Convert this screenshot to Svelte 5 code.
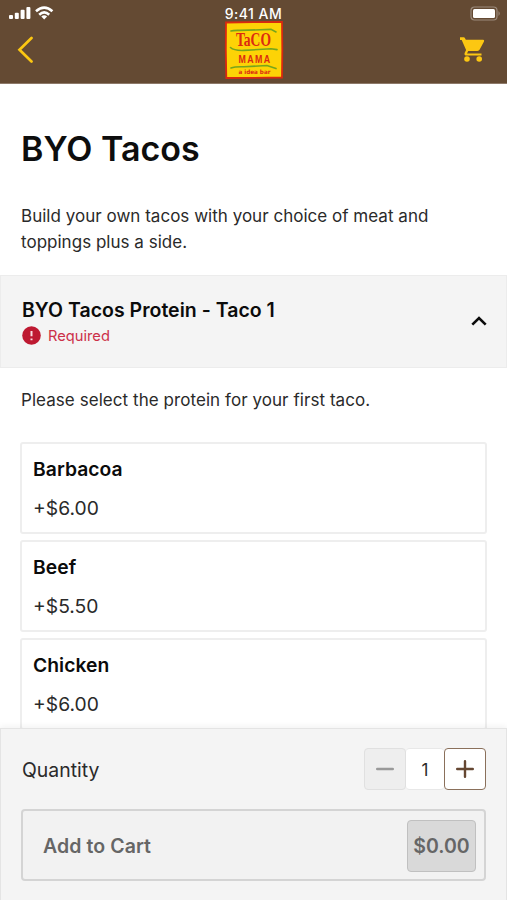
<script lang="ts">
  interface Option {
    name: string;
    price: number;
  }

  const options: Option[] = [
    { name: 'Barbacoa', price: 6 },
    { name: 'Beef', price: 5.5 },
    { name: 'Chicken', price: 6 }
  ];

  let quantity = $state(1);
  let expanded = $state(true);
  let selected: Option | null = $state(null);

  let total = $derived((selected ? selected.price : 0) * quantity);
</script>

<div class="screen">
  <header>
    <div class="status-bar">
      <svg class="signals" width="46" height="14" viewBox="0 0 46 14" fill="#fff">
        <rect x="0" y="9" width="4" height="4" rx="1" />
        <rect x="5.8" y="6.7" width="4" height="6.3" rx="1" />
        <rect x="11.6" y="3.8" width="4" height="9.2" rx="1" />
        <rect x="17.4" y="1" width="4" height="12" rx="1" />
        <g fill="none" stroke="#fff" stroke-width="2.6">
          <path d="M27 5.2Q35.2 -2.1 43.4 5.2" />
          <path d="M30.2 8.7Q35.2 4.1 40.2 8.7" />
        </g>
        <path d="M32.3 10.5Q35.2 8 38.1 10.5L35.2 13.5Z" />
      </svg>
      <span class="time">9:41 AM</span>
      <svg class="battery" width="31" height="16" viewBox="0 0 31 16">
        <rect x="1" y="1" width="26" height="13" rx="3.5" fill="none" stroke="#9b8a7c" stroke-width="1.2" />
        <rect x="3" y="3" width="22" height="9" rx="1.5" fill="#fff" />
        <path d="M28.5 5Q31 7.5 28.5 10Z" fill="#9b8a7c" />
      </svg>
    </div>
    <div class="nav">
      <button class="icon-btn" aria-label="Back">
        <svg width="16" height="28" viewBox="0 0 16 28" fill="none" stroke="#fcc712" stroke-width="2.7" stroke-linecap="round">
          <path d="M14.5 2L2.5 13.8L14.5 25.5" />
        </svg>
      </button>
      <svg class="logo" width="60" height="60" viewBox="0 0 60 60">
        <path d="M2 2.5L29 2.2L58 1.8L58.3 30L58 57.5L30 57.8L2.3 58L1.8 30Z" fill="#fdd306" stroke="#d9290f" stroke-width="1.8" />
        <g fill="none" stroke="#76a51d" stroke-width="1.6" stroke-linecap="round">
          <path d="M7 11Q9 10.2 16 10.4L47 9.4L52 12" />
          <path d="M6.5 27.5Q10 30.8 20 30.4L47 28.8L53 29.6" />
          <path d="M7 48Q11 46.5 20 46.8L43 45.5L52 48.6" />
        </g>
        <g fill="#dc2b10" text-anchor="middle">
          <text class="taco" x="29.5" y="26" textLength="35" lengthAdjust="spacingAndGlyphs">TaCO</text>
          <text class="mama" x="31" y="42.6" textLength="33" lengthAdjust="spacingAndGlyphs">MAMA</text>
          <text class="tag" x="30.5" y="54" textLength="32" lengthAdjust="spacingAndGlyphs">a idea bar</text>
        </g>
      </svg>
      <button class="icon-btn" aria-label="Cart">
        <svg width="26" height="28" viewBox="0 0 26 28" fill="#fcc712">
          <path d="M1 1.3H4.7Q5.6 1.3 6 2.2L6.8 3.8H24.2Q25.6 4 25 5.4L20.7 13.5Q20 14.9 18.5 14.9H9.2L8 17.4H22.5V19.4H6.5Q4.9 18.9 5.6 17L7.1 13.9L2.7 4H1Z" />
          <circle cx="8" cy="23" r="2.8" />
          <circle cx="20.2" cy="23" r="2.8" />
        </svg>
      </button>
    </div>
  </header>

  <main>
    <h1>BYO Tacos</h1>
    <p class="description">Build your own tacos with your choice of meat and<br />toppings plus a side.</p>

    <button class="group-header" aria-expanded={expanded} onclick={() => (expanded = !expanded)}>
      <div class="group-title">
        <h2>BYO Tacos Protein - Taco 1</h2>
        <div class="required">
          <svg width="19" height="19" viewBox="0 0 19 19">
            <circle cx="9.5" cy="9.5" r="9.3" fill="#be1931" />
            <path d="M9.5 4.9V10.3M9.5 12.5V14.2" stroke="#f7dce0" stroke-width="2" />
          </svg>
          <span>Required</span>
        </div>
      </div>
      <svg class="chevron" class:closed={!expanded} width="16" height="12" viewBox="0 0 16 12" fill="none" stroke="#0b0b0b" stroke-width="2.6">
        <path d="M1.3 8.7L8 2L14.7 8.7" />
      </svg>
    </button>

    {#if expanded}
      <p class="hint">Please select the protein for your first taco.</p>
      <div class="options">
        {#each options as option}
          <button class="option" class:selected={selected === option} onclick={() => (selected = option)}>
            <span class="name">{option.name}</span>
            <span class="price">+${option.price.toFixed(2)}</span>
          </button>
        {/each}
      </div>
    {/if}
  </main>

  <footer>
    <div class="quantity">
      <span class="label">Quantity</span>
      <div class="stepper">
        <button class="minus" aria-label="Decrease" disabled={quantity <= 1} onclick={() => quantity--}>
          <svg width="18" height="18" viewBox="0 0 18 18" stroke="#999" stroke-width="2.4" stroke-linecap="round">
            <path d="M1.2 9H16.8" />
          </svg>
        </button>
        <span class="count">{quantity}</span>
        <button class="plus" aria-label="Increase" onclick={() => quantity++}>
          <svg width="18" height="18" viewBox="0 0 18 18" stroke="#654732" stroke-width="2.4" stroke-linecap="round">
            <path d="M1.2 9H16.8M9 1.2V16.8" />
          </svg>
        </button>
      </div>
    </div>
    <button class="add" disabled={!selected}>
      <span class="add-label">Add to Cart</span>
      <span class="total">${total.toFixed(2)}</span>
    </button>
  </footer>
</div>

<style>
  :global(body) {
    background: #fff;
  }

  .screen {
    display: flex;
    flex-direction: column;
    width: 507px;
    height: 900px;
    overflow: hidden;
    background: #fff;
    color: #2a2a2a;
    font-family: Inter, 'Liberation Sans', sans-serif;
  }

  .screen * {
    box-sizing: border-box;
  }

  button {
    padding: 0;
    border: none;
    background: none;
    color: inherit;
    font-family: inherit;
    text-align: left;
    cursor: pointer;
  }

  svg {
    display: block;
    flex: none;
  }

  header {
    height: 84px;
    flex: none;
    background: #644a33;
    border-bottom: 1px solid #8d7969;
  }

  .status-bar {
    display: grid;
    grid-template-columns: 1fr auto 1fr;
    height: 20px;
    padding: 6px 6px 0 9px;
  }

  .time {
    margin-right: 3px;
    color: #fff;
    font-size: 14px;
    font-weight: 500;
    line-height: 16px;
    letter-spacing: 0.5px;
  }

  .battery {
    justify-self: end;
  }

  .nav {
    display: grid;
    grid-template-columns: 1fr auto 1fr;
    height: 60px;
    padding: 0 22px;
  }

  .icon-btn {
    height: 60px;
    justify-self: start;
    margin-left: -5px;
  }

  .icon-btn:last-child {
    justify-self: end;
  }

  .logo {
    overflow: visible;
  }

  .taco {
    font: 700 18px 'Liberation Serif', serif;
  }

  .mama {
    font: 700 11.5px 'Liberation Sans', sans-serif;
    letter-spacing: 1.8px;
  }

  .tag {
    font: 700 6px 'DejaVu Sans', sans-serif;
  }

  main {
    flex: 1;
    min-height: 0;
    overflow: hidden;
  }

  h1 {
    margin: 43px 21px 0;
    color: #0d0d0d;
    font-size: 34px;
    font-weight: 600;
    line-height: 44px;
  }

  .description {
    margin: 32px 21px 20px;
    font-size: 17px;
    line-height: 26px;
    letter-spacing: 0.02px;
  }

  .group-header {
    display: flex;
    align-items: center;
    justify-content: space-between;
    width: 100%;
    height: 93px;
    padding: 0 19px 0 21px;
    border: 1px solid #ececec;
    background: #f4f4f4;
  }

  .group-title {
    padding-top: 2px;
  }

  h2 {
    margin: 0;
    color: #0b0b0b;
    font-size: 19.5px;
    font-weight: 600;
    line-height: 26px;
    letter-spacing: 0.02px;
  }

  .required {
    display: flex;
    align-items: center;
    gap: 7px;
    height: 25px;
    color: #cc3049;
    font-size: 14.7px;
  }

  .chevron.closed {
    transform: rotate(180deg);
  }

  .hint {
    margin: 19px 21px 29px;
    font-size: 17px;
    line-height: 26px;
    letter-spacing: 0.06px;
  }

  .options {
    display: flex;
    flex-direction: column;
    gap: 6px;
    padding: 0 20px;
  }

  .option {
    display: flex;
    flex-direction: column;
    height: 92px;
    padding: 13px 11px 0;
    border: 2px solid #eee;
    border-radius: 3px;
  }

  .option.selected {
    border-color: #644a33;
  }

  .name {
    color: #0b0b0b;
    font-size: 19.3px;
    font-weight: 600;
    line-height: 24px;
    letter-spacing: 0.05px;
  }

  .price {
    margin-top: 15px;
    font-size: 19.3px;
    line-height: 24px;
  }

  footer {
    height: 172px;
    flex: none;
    padding: 19px 20px 0 20px;
    border: 1px solid #e4e4e4;
    border-bottom: none;
    background: #f4f4f4;
    box-shadow: 0 -2px 6px rgba(0, 0, 0, 0.05);
  }

  .quantity {
    display: flex;
    align-items: center;
    justify-content: space-between;
    height: 42px;
  }

  .label {
    padding: 2px 0 0 1px;
    font-size: 19.4px;
  }

  .stepper {
    display: flex;
  }

  .stepper button,
  .count {
    display: flex;
    align-items: center;
    justify-content: center;
    width: 42px;
    height: 42px;
    border: 1px solid #e0e0e0;
    border-radius: 4px;
  }

  .stepper .minus {
    background: #eee;
  }

  .stepper .count {
    width: 38px;
    padding-top: 1px;
    border-width: 1px 0;
    border-color: #e8e8e8;
    background: #fff;
    font-size: 17px;
  }

  .stepper .plus {
    border-color: #8a705b;
    background: #fff;
  }

  .add {
    display: flex;
    align-items: center;
    justify-content: space-between;
    width: 100%;
    height: 72px;
    margin-top: 19px;
    padding: 1px 8px 0 20px;
    border: 2px solid #d4d4d4;
    border-radius: 4px;
    background: #f2f2f2;
    color: #666;
    font-weight: 600;
  }

  .add-label {
    font-size: 19.5px;
    letter-spacing: 0.08px;
  }

  .total {
    display: flex;
    align-items: center;
    justify-content: center;
    width: 69px;
    height: 52px;
    border: 1px solid #c0c0c0;
    border-radius: 4px;
    background: #d9d9d9;
    font-size: 19.5px;
  }
</style>
